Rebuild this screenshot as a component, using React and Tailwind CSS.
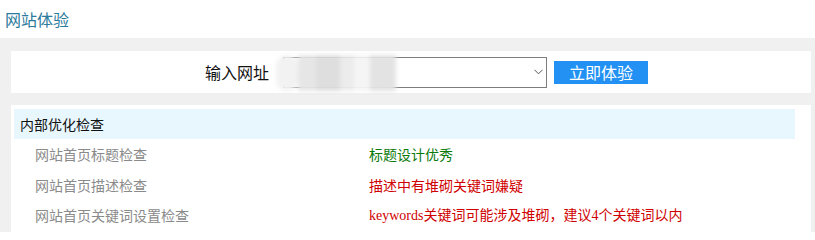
export default function App() {
  const rows = [
    { label: '网站首页标题检查', value: '标题设计优秀', tone: 'text-[#0a7a0a]' },
    { label: '网站首页描述检查', value: '描述中有堆砌关键词嫌疑', tone: 'text-[#d00000]' },
    { label: '网站首页关键词设置检查', value: null, tone: 'text-[#d00000]' },
  ];

  return (
    <div className="w-[815px] h-[232px] overflow-hidden bg-white font-['Noto_Sans_CJK_SC',sans-serif]">
      <div className="h-[38px] px-[5px] flex items-center text-[16px] leading-none text-[#2c7a9c]">网站体验</div>

      <div className="bg-[#f0f0f0] h-[194px] pt-[13px] pl-[11px] pr-[4px]">
        <div className="h-[42px] bg-white flex items-center pl-[194px]">
          <span className="text-[16px] leading-none text-[#111]">输入网址</span>
          <div className="relative ml-[14px] w-[264px] h-[31px] border border-[#7d7d7d] bg-white flex items-center justify-end pr-[3px]">
            <div className="absolute left-[-8px] top-[-3px] w-[120px] h-[36px] flex blur-[2px]">
              <div className="w-[22px] h-full rounded-full bg-[#f2f2f2]" />
              <div className="w-[18px] h-full bg-[#e6e6e6]" />
              <div className="w-[24px] h-full bg-[#dedede]" />
              <div className="w-[14px] h-full bg-[#ececec]" />
              <div className="w-[16px] h-full bg-[#f5f5f5]" />
              <div className="w-[26px] h-full bg-[#e3e3e3]" />
            </div>
            <svg width="9" height="6" viewBox="0 0 9 6" className="relative">
              <path d="M0.5 0.8 L4.5 4.8 L8.5 0.8" fill="none" stroke="#555" strokeWidth="1" />
            </svg>
          </div>
          <button className="ml-[7px] w-[94px] h-[23px] bg-[#2291f3] text-white text-[16px] leading-none flex items-center justify-center">
            立即体验
          </button>
        </div>

        <div className="mt-[12px] bg-white h-[140px] pt-[4px] pl-[3px]">
          <div className="w-[781px] h-[30px] bg-[#e8f6fd] pl-[6px] flex items-center text-[14px] leading-none text-[#111]">
            内部优化检查
          </div>
          {rows.map((r) => (
            <div key={r.label} className="h-[30.5px] flex items-center text-[14px] leading-none">
              <span className="w-[355px] pl-[21px] text-[#8a8a8a]">{r.label}</span>
              {r.value ? (
                <span className={r.tone}>{r.value}</span>
              ) : (
                <span className={r.tone}>
                  <span className="font-['Liberation_Serif',serif]">keywords</span>
                  关键词可能涉及堆砌，建议
                  <span className="font-['Liberation_Serif',serif]">4</span>
                  个关键词以内
                </span>
              )}
            </div>
          ))}
        </div>
      </div>
    </div>
  );
}
